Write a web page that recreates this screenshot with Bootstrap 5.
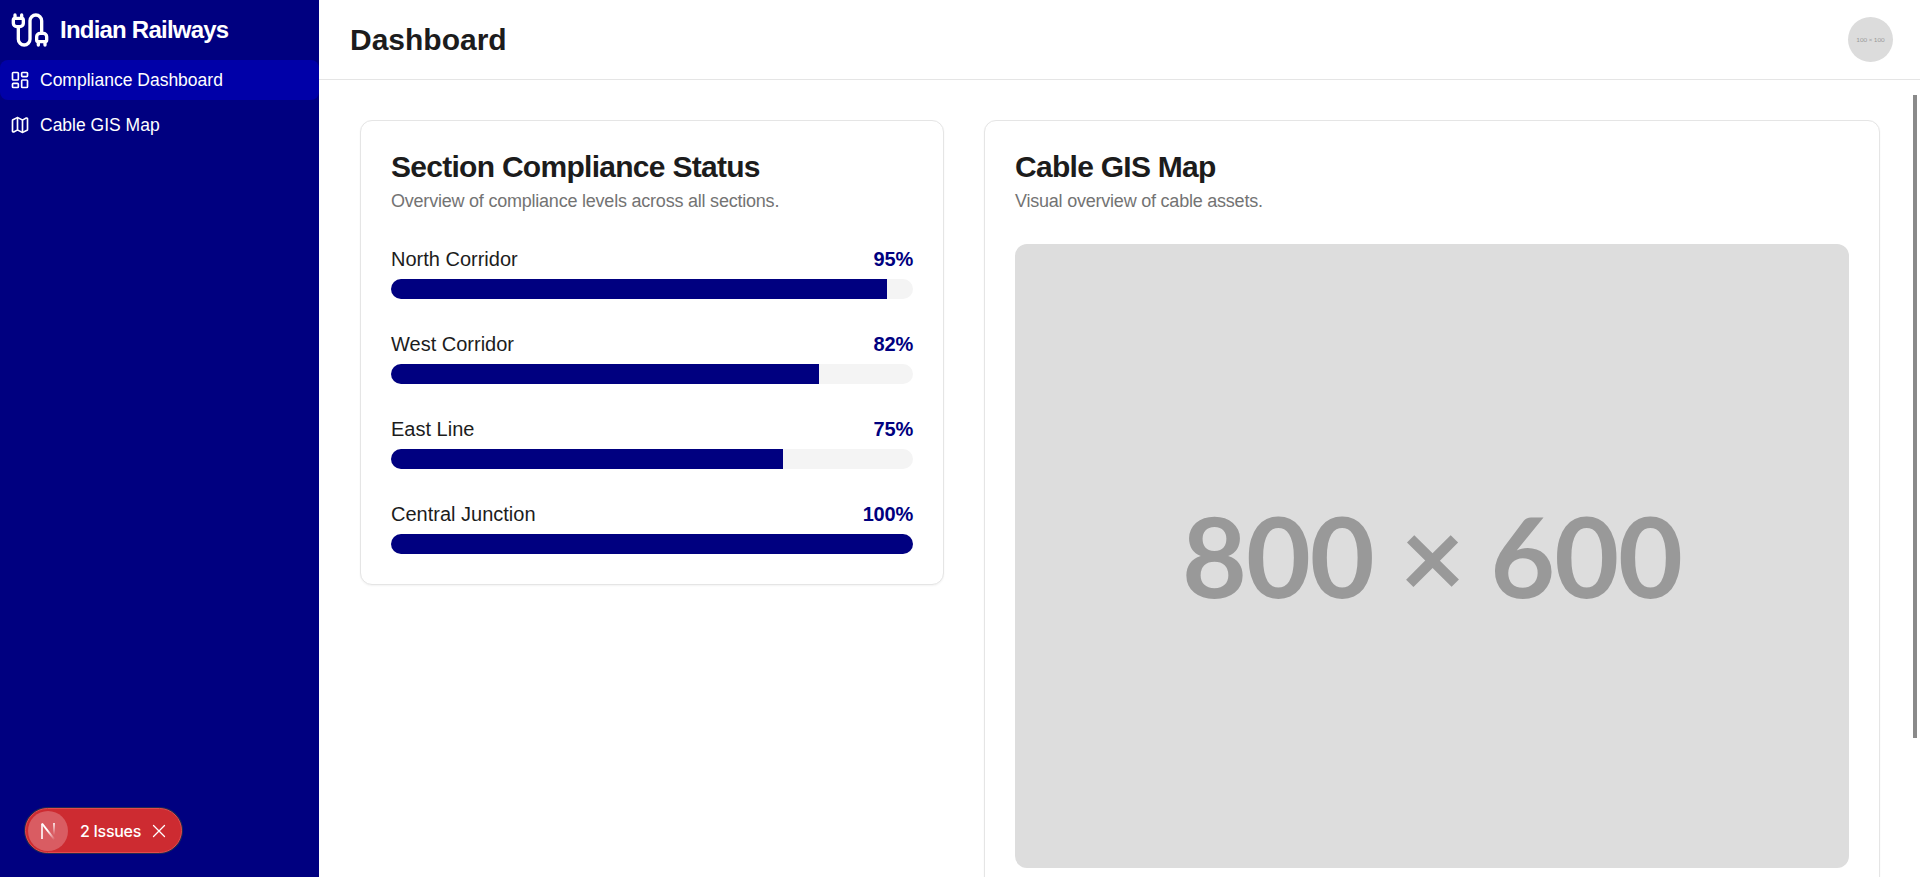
<!DOCTYPE html>
<html lang="en">
<head>
<meta charset="utf-8">
<title>Dashboard</title>
<link href="https://cdn.jsdelivr.net/npm/bootstrap@5.3.0/dist/css/bootstrap.min.css" rel="stylesheet">
<style>
html,body{height:100%;overflow:hidden}
body{font-family:"Liberation Sans",Arial,sans-serif;color:#1c1c1c;background:#fff}
.shell{height:100vh}
.side{width:319px;flex:none;background:#000080;color:#fff;position:relative}
.brand{height:60px;padding:0 10px;font-size:24px;font-weight:700;gap:10px;letter-spacing:-.78px}
.side-link{height:40px;padding:0 10px;gap:10px;color:#fff;font-size:17.5px;text-decoration:none;border-radius:8px;margin-bottom:5px}
.side-link.current{background:#0000a8}
.rightpane{min-width:0;position:relative}
.topbar{height:80px;padding:0 27px 0 31px;border-bottom:1px solid #e5e5e5}
.topbar h1{font-size:30px;font-weight:700;margin:0;line-height:1}
.avatar{width:45px;height:45px;border-radius:50%;background:#dcdcdc;color:#999;font-size:6.2px;font-family:Lato,sans-serif}
.scrollpane{overflow-y:auto;padding:40px 40px 30px 41px;min-height:0}
.thumb-bar{position:absolute;right:3px;top:95px;width:4px;height:643px;background:#8a8a8a}
.panes{display:grid;grid-template-columns:584px 896px;gap:40px;align-items:start}
.panel{border:1px solid #e5e5e5;border-radius:12px;padding:30px;background:#fff;box-shadow:0 1px 2px rgba(0,0,0,.05)}
.panel h2{font-size:30px;font-weight:700;line-height:32px;margin:0 0 4px 0;letter-spacing:-.72px}
.panel-sub{font-size:18px;line-height:28px;color:#737373;margin:0;letter-spacing:-.22px}
.metric-list{margin-top:30px}
.metric{margin-bottom:31px}
.metric:last-child{margin-bottom:0}
.metric-head{font-size:20px;line-height:28px;margin-bottom:6px}
.metric-val{font-weight:700;color:#000080;letter-spacing:-.2px}
.meter{height:20px;border-radius:10px;background:#f4f4f4;overflow:hidden}
.meter-fill{height:100%;background:#000080}
.mapimg{margin-top:29px;height:624px;padding-bottom:3px;border-radius:12px;background:#dddddd;color:#999;font-family:Lato,sans-serif;font-size:112px;font-weight:700;line-height:1;letter-spacing:-1px}
.issue-pill{position:absolute;left:25px;top:808px;height:45px;width:157px;border-radius:23px;background:#cd2b31;border:1px solid #e5484d;box-shadow:0 0 0 1px #222a50;color:#fff;font-size:16px;font-family:Inter,sans-serif;font-weight:500;letter-spacing:-.3px}
.issue-n{width:40px;height:40px;border-radius:50%;background:#d95c62;margin-left:2px}
.issue-txt{margin-left:12px}
.issue-x{margin-left:10px}
</style>
</head>
<body>
<div class="shell d-flex">
  <aside class="side d-flex flex-column">
    <div class="brand d-flex align-items-center">
      <svg width="40" height="40" viewBox="0 0 24 24" fill="none" stroke="#fff" stroke-width="2" stroke-linecap="round" stroke-linejoin="round"><path d="M17 19a1 1 0 0 1-1-1v-2a2 2 0 0 1 2-2h2a2 2 0 0 1 2 2v2a1 1 0 0 1-1 1z"/><path d="M17 21v-2"/><path d="M19 14V6.500a1 1 0 0 0-7 0v11a1 1 0 0 1-7 0V10"/><path d="M21 21v-2"/><path d="M3 5V3"/><path d="M4 10a2 2 0 0 1-2-2V6a1 1 0 0 1 1-1h4a1 1 0 0 1 1 1v2a2 2 0 0 1-2 2z"/><path d="M7 5V3"/></svg>
      <span>Indian Railways</span>
    </div>
    <a class="side-link current d-flex align-items-center" href="#">
      <svg width="20" height="20" viewBox="0 0 24 24" fill="none" stroke="#fff" stroke-width="2" stroke-linecap="round" stroke-linejoin="round"><rect x="3" y="3" width="7" height="9" rx="1"/><rect x="14" y="3" width="7" height="5" rx="1"/><rect x="14" y="12" width="7" height="9" rx="1"/><rect x="3" y="16" width="7" height="5" rx="1"/></svg>
      <span>Compliance Dashboard</span>
    </a>
    <a class="side-link d-flex align-items-center" href="#">
      <svg width="20" height="20" viewBox="0 0 24 24" fill="none" stroke="#fff" stroke-width="2" stroke-linecap="round" stroke-linejoin="round"><path d="M14.106 5.553a2 2 0 0 0 1.788 0l3.659-1.830A1 1 0 0 1 21 4.619v12.764a1 1 0 0 1-.553.894l-4.553 2.277a2 2 0 0 1-1.788 0l-4.212-2.106a2 2 0 0 0-1.788 0l-3.659 1.830A1 1 0 0 1 3 19.381V6.618a1 1 0 0 1 .553-.894l4.553-2.277a2 2 0 0 1 1.788 0z"/><path d="M15 5.764v15"/><path d="M9 3.236v15"/></svg>
      <span>Cable GIS Map</span>
    </a>
    <div class="issue-pill d-flex align-items-center">
      <span class="issue-n d-flex align-items-center justify-content-center">
        <svg width="16" height="18" viewBox="0 0 16 18" fill="none" stroke-width="1.600" aria-label="Next logo"><defs><linearGradient id="fadeA" x1="0" y1="0" x2="1" y2="1"><stop offset=".45" stop-color="#fff"/><stop offset="1" stop-color="#fff" stop-opacity="0"/></linearGradient><linearGradient id="fadeB" gradientUnits="userSpaceOnUse" x1="14" y1="1" x2="14" y2="13"><stop offset="0" stop-color="#fff"/><stop offset="1" stop-color="#fff" stop-opacity="0"/></linearGradient></defs><path d="M2 17V1.800" stroke="#fff"/><path d="M2 1.500L14.500 17.500" stroke="url(#fadeA)" stroke-width="2"/><path d="M14 1v12" stroke="url(#fadeB)"/></svg>
      </span>
      <span class="issue-txt">2 Issues</span>
      <svg class="issue-x" width="16" height="16" viewBox="0 0 16 16" fill="none" stroke="#fff" stroke-width="1.300" stroke-linecap="round"><path d="M2.500 2.500l11 11M13.500 2.500l-11 11"/></svg>
    </div>
  </aside>
  <div class="rightpane flex-grow-1 d-flex flex-column">
    <header class="topbar d-flex align-items-center justify-content-between flex-shrink-0">
      <h1>Dashboard</h1>
      <div class="avatar d-flex align-items-center justify-content-center">100 × 100</div>
    </header>
    <main class="scrollpane flex-grow-1">
      <div class="panes">
        <section class="panel">
          <h2>Section Compliance Status</h2>
          <p class="panel-sub">Overview of compliance levels across all sections.</p>
          <div class="metric-list">
          <div class="metric"><div class="metric-head d-flex justify-content-between"><span>North Corridor</span><span class="metric-val">95%</span></div><div class="meter"><div class="meter-fill" style="width:95%"></div></div></div>
          <div class="metric"><div class="metric-head d-flex justify-content-between"><span>West Corridor</span><span class="metric-val">82%</span></div><div class="meter"><div class="meter-fill" style="width:82%"></div></div></div>
          <div class="metric"><div class="metric-head d-flex justify-content-between"><span>East Line</span><span class="metric-val">75%</span></div><div class="meter"><div class="meter-fill" style="width:75%"></div></div></div>
          <div class="metric"><div class="metric-head d-flex justify-content-between"><span>Central Junction</span><span class="metric-val">100%</span></div><div class="meter"><div class="meter-fill" style="width:100%"></div></div></div>
          </div>
        </section>
        <section class="panel">
          <h2>Cable GIS Map</h2>
          <p class="panel-sub">Visual overview of cable assets.</p>
          <div class="mapimg d-flex align-items-center justify-content-center">800 × 600</div>
        </section>
      </div>
    </main>
    <div class="thumb-bar"></div>
  </div>
</div>
<script src="https://cdn.jsdelivr.net/npm/bootstrap@5.3.0/dist/js/bootstrap.bundle.min.js"></script>
</body>
</html>
